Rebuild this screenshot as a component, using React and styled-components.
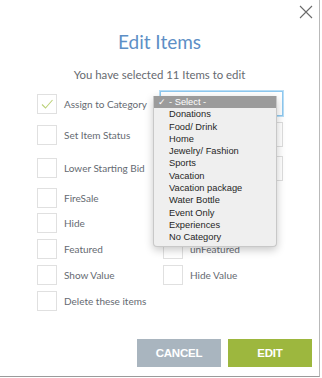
import React from "react";
import styled, { createGlobalStyle } from "styled-components";

const Global = createGlobalStyle`
  html, body { margin: 0; padding: 0; background: #fff; overflow: hidden; }
  body { font-family: Lato, "Open Sans", sans-serif; }
`;

const Modal = styled.div`
  position: relative;
  box-sizing: border-box;
  width: 320px;
  height: 377px;
  background: #fff;
  border-right: 1px solid #b9b9b9;
  border-bottom: 1px solid #9a9a9a;
  display: flex;
  flex-direction: column;
`;

const Close = styled.button`
  position: absolute;
  top: 4px;
  right: 5px;
  width: 16px;
  height: 16px;
  padding: 0;
  border: 0;
  background: none;
  display: flex;
  align-items: center;
  justify-content: center;
`;

const Title = styled.h1`
  margin: 29px 0 0;
  text-align: center;
  font-family: Lato, sans-serif;
  font-weight: 400;
  font-size: 19px;
  line-height: 26px;
  color: #5d8fc6;
`;

const Subtitle = styled.p`
  margin: 12px 0 0;
  text-align: center;
  font-family: Lato, sans-serif;
  font-size: 11.4px;
  line-height: 16px;
  color: #666a70;
`;

const Form = styled.div`
  margin-top: 6px;
  padding-left: 37px;
  display: flex;
  flex-direction: column;
`;

const Row = styled.div`
  height: ${(p) => p.$h}px;
  display: grid;
  grid-template-columns: 123px 1fr;
  align-items: center;
`;

const Option = styled.label`
  display: flex;
  align-items: center;
  gap: 7px;
  margin-left: ${(p) => p.$indent || 0}px;
  font-family: Lato, sans-serif;
  font-size: 10px;
  color: #656a71;
  white-space: nowrap;
`;

const Box = styled.span`
  box-sizing: border-box;
  width: 20px;
  height: 20px;
  border: 1px solid #e0e0e0;
  background: #fff;
  display: flex;
  align-items: center;
  justify-content: center;
  flex: none;
`;

const Field = styled.div`
  box-sizing: border-box;
  width: 123px;
  height: 25px;
  border: 1px solid ${(p) => (p.$focus ? "#8ec8ef" : "#dedede")};
  box-shadow: ${(p) => (p.$focus ? "0 0 0 1px #b9def6" : "none")};
  background: #fff;
`;

const Menu = styled.ul`
  position: absolute;
  left: 153px;
  top: 96px;
  width: 124px;
  box-sizing: border-box;
  margin: 0;
  padding: 0 0 2px;
  list-style: none;
  background: #efefef;
  border: 1px solid #c8c8c8;
  border-top: 0;
  border-radius: 0 0 4px 4px;
  box-shadow: 0 3px 8px rgba(0, 0, 0, 0.22);
  font-family: "Liberation Sans", Arial, sans-serif;
  font-size: 9.3px;
`;

const MenuItem = styled.li`
  position: relative;
  height: 12.3px;
  line-height: 12.3px;
  padding-left: 15px;
  color: ${(p) => (p.$active ? "#fff" : "#262626")};
  background: ${(p) => (p.$active ? "#9b9b9b" : "transparent")};
  white-space: nowrap;
`;

const Tick = styled.span`
  position: absolute;
  left: 4px;
  top: 0;
`;

const Footer = styled.div`
  margin-top: auto;
  margin-bottom: 9px;
  padding-right: 7px;
  display: flex;
  justify-content: flex-end;
  gap: 7px;
`;

const Button = styled.button`
  width: 84px;
  height: 28px;
  border: 0;
  border-radius: 0;
  background: ${(p) => p.$bg};
  color: #fff;
  font-family: "Liberation Sans", Arial, sans-serif;
  font-weight: 700;
  font-size: 11.5px;
  letter-spacing: -0.2px;
`;

const Check = () => (
  <svg width="14" height="12" viewBox="0 0 14 12">
    <path d="M2 6.5 L5.5 10 L12.5 2" fill="none" stroke="#bcd27a" strokeWidth="1.1" />
  </svg>
);

const Opt = ({ label, checked, indent }) => (
  <Option $indent={indent}>
    <Box>{checked && <Check />}</Box>
    {label}
  </Option>
);

const categories = [
  "Donations",
  "Food/ Drink",
  "Home",
  "Jewelry/ Fashion",
  "Sports",
  "Vacation",
  "Vacation package",
  "Water Bottle",
  "Event Only",
  "Experiences",
  "No Category",
];

export default function App() {
  return (
    <>
      <Global />
      <Modal>
        <Close aria-label="close">
          <svg width="14" height="14" viewBox="0 0 14 14">
            <path d="M1 1 L13 13 M13 1 L1 13" stroke="#6a6a6a" strokeWidth="1.1" />
          </svg>
        </Close>
        <Title>Edit Items</Title>
        <Subtitle>You have selected 11 Items to edit</Subtitle>
        <Form>
          <Row $h={29}>
            <Opt label="Assign to Category" checked />
            <Field $focus />
          </Row>
          <Row $h={33}>
            <Opt label="Set Item Status" />
            <Field />
          </Row>
          <Row $h={34}>
            <Opt label="Lower Starting Bid" />
            <Field />
          </Row>
          <Row $h={26}>
            <Opt label="FireSale" />
          </Row>
          <Row $h={24}>
            <Opt label="Hide" />
          </Row>
          <Row $h={27}>
            <Opt label="Featured" />
            <Opt label="unFeatured" indent={3} />
          </Row>
          <Row $h={26}>
            <Opt label="Show Value" />
            <Opt label="Hide Value" indent={3} />
          </Row>
          <Row $h={26}>
            <Opt label="Delete these items" />
          </Row>
        </Form>
        <Footer>
          <Button $bg="#a9b5bf">CANCEL</Button>
          <Button $bg="#9db73e">EDIT</Button>
        </Footer>
        <Menu>
          <MenuItem $active>
            <Tick>✓</Tick>- Select -
          </MenuItem>
          {categories.map((c) => (
            <MenuItem key={c}>{c}</MenuItem>
          ))}
        </Menu>
      </Modal>
    </>
  );
}
